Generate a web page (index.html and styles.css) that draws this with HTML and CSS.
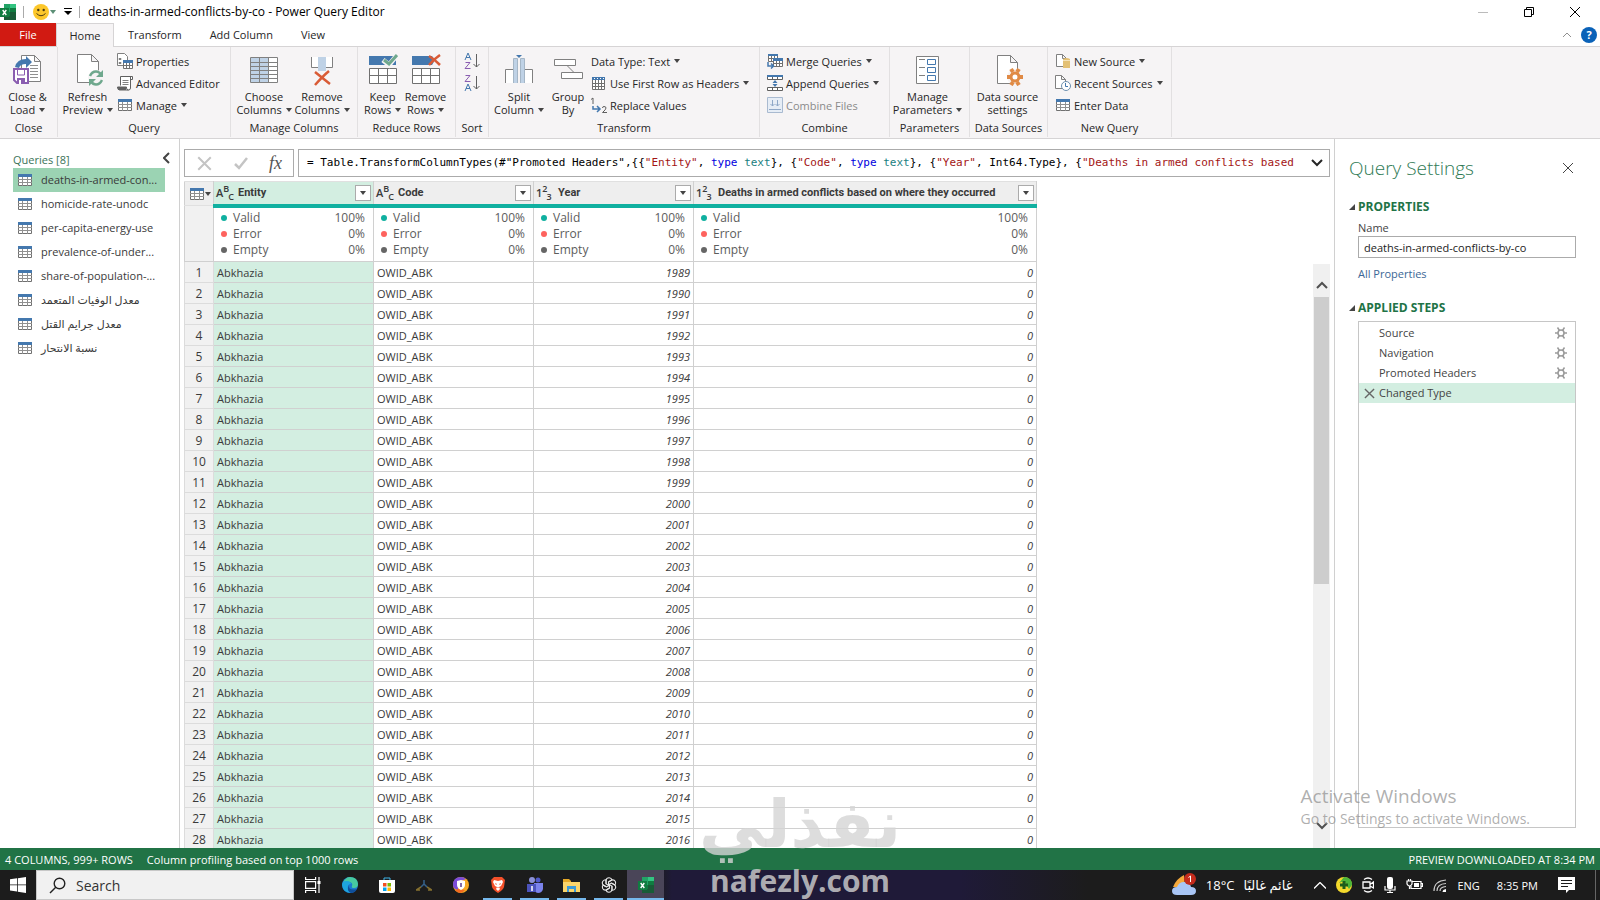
FILE: index.html
```
<!DOCTYPE html>
<html lang="en">

<head>
  <meta charset="UTF-8" />
  <meta name="viewport" content="width=device-width, initial-scale=1.0" />
  <title>deaths-in-armed-conflicts-by-co - Power Query Editor</title>
  <link rel="stylesheet" href="styles.css">
</head>

<body>
  <!-- Shared icons -->
  <svg class="sprite" aria-hidden="true">
    <symbol id="icon-table" viewBox="0 0 14 12">
      <path fill="#fff" stroke="#707070" d="M.5 .5h13v11h-13z" />
      <path fill="none" stroke="#909090" d="M0 5.500h14M0 8.500h14M4.500 3v9M9.500 3v9" />
      <path fill="#4478ae" d="M0 0h14v3H0z" />
    </symbol>
    <symbol id="icon-cross" viewBox="0 0 12 12">
      <path fill="none" stroke="currentColor" d="M1 1l10 10M11 1L1 11" />
    </symbol>
    <symbol id="icon-down" viewBox="0 0 12 8">
      <path fill="none" stroke="currentColor" stroke-width="2" d="M1 1l5 5 5-5" />
    </symbol>
    <symbol id="icon-gear" viewBox="0 0 12 12">
      <circle cx="6" cy="6" r="3" fill="none" stroke="#9a9a9a" stroke-width="1.500" />
      <path fill="none" stroke="#9a9a9a" stroke-width="1.500" d="M0 6h3M9 6h3M2.500 .5l2 3M9.500 .5l-2 3M2.500 11.500l2-3M9.500 11.500l-2-3" />
    </symbol>
    <symbol id="icon-excel" viewBox="0 0 16 16">
      <path fill="#21a366" d="M4 0h12v8H4z" />
      <path fill="#33c481" d="M10 0h6v4h-6z" />
      <path fill="#107c41" d="M10 4h6v4h-6zM4 8h6v4H4z" />
      <path fill="#185c37" d="M4 12h12v4H4zM10 8h6v4h-6z" />
      <path fill="#107c41" d="M0 4h9v9H0z" />
      <path fill="none" stroke="#fff" stroke-width="1.400" d="M2.700 6l3.600 5M6.300 6l-3.600 5" />
    </symbol>
  </svg>

  <div class="app">
    <header class="titlebar">
      <svg class="titlebar_logo" width="16" height="16"><use href="#icon-excel" /></svg>
      <span class="titlebar_divider"></span>
      <button class="titlebar_smile" aria-label="Send a smile">
        <svg width="16" height="16" viewBox="0 0 16 16">
          <circle cx="8" cy="8" r="8" fill="#fcc72b" />
          <circle cx="5.300" cy="6" r="1.200" fill="#4b3a12" />
          <circle cx="10.700" cy="6" r="1.200" fill="#4b3a12" />
          <path fill="none" stroke="#4b3a12" d="M3.500 9.500q4.500 4.500 9 0" />
        </svg>
        <i class="caret caret-green"></i>
      </button>
      <button class="titlebar_quick" aria-label="Customize toolbar">
        <svg width="8" height="7" viewBox="0 0 8 7"><path d="M0 0h8v1H0zM0 3h8L4 7z" /></svg>
      </button>
      <span class="titlebar_divider"></span>
      <h1 class="titlebar_title">deaths-in-armed-conflicts-by-co - Power Query Editor</h1>
      <div class="window-controls">
        <button class="is-faint" aria-label="Minimize"><svg width="10" height="10" viewBox="0 0 10 10"><path stroke="currentColor" d="M0 5.500h10" /></svg></button>
        <button aria-label="Restore"><svg width="10" height="10" viewBox="0 0 10 10"><path fill="none" stroke="currentColor" d="M.5 2.500h7v7h-7zM2.500 2.500v-2h7v7h-2" /></svg></button>
        <button aria-label="Close"><svg width="12" height="12"><use href="#icon-cross" /></svg></button>
      </div>
    </header>

    <nav class="tabs">
      <button class="tab tab-file">File</button>
      <button class="tab tab-active">Home</button>
      <button class="tab">Transform</button>
      <button class="tab">Add Column</button>
      <button class="tab">View</button>
      <div class="tabs_tools">
        <button class="tabs_collapse" aria-label="Collapse ribbon"><svg width="8" height="6" viewBox="0 0 8 6"><path fill="none" stroke="#909090" d="M0 5l4-4 4 4" /></svg></button>
        <button class="help" aria-label="Help">?</button>
      </div>
    </nav>

    <section class="ribbon">
      <div class="group group-close">
        <div class="group_body">
          <button class="big">
            <svg width="30" height="32" viewBox="0 0 30 32">
              <path fill="#fff" stroke="#808080" d="M8.500 1.500h13l6 6v20h-19zM21.500 1.500v6h6" />
              <path stroke="#909090" d="M17 11.500h8M17 14.500h8M17 17.500h8M17 20.500h8M17 23.500h8" />
              <path fill="#4478ae" d="M2 13q2-8 11-8V2l6 6-6 6v-4q-6 0-7 4z" />
              <path fill="#fff" stroke="#8a5db0" stroke-width="2" d="M1 15h14v14H4l-3-3z" />
              <path fill="#8a5db0" d="M4 24h8v6H4z" />
              <path fill="none" stroke="#8a5db0" d="M4.500 16v5h7v-5" />
              <path fill="#fff" d="M6 26h2v4H6z" />
            </svg>
            <span>Close &amp;<br>Load <i class="caret"></i></span>
          </button>
        </div>
        <h2 class="group_name">Close</h2>
      </div>

      <div class="group group-query">
        <div class="group_body">
          <button class="big">
            <svg width="30" height="32" viewBox="0 0 30 32">
              <path fill="#fff" stroke="#808080" d="M4.500 .5h14l7 7v21h-21zM18.500 .5v7h7" />
              <circle cx="23" cy="24" r="8" fill="#f6f4f5" />
              <path fill="none" stroke="#6fa88d" stroke-width="2.500" d="M17 22q2-4.500 6-4.500 3 0 5 3M29 26q-2 4.500-6 4.500-3 0-5-3" />
              <path fill="#6fa88d" d="M30 16v7h-7zM16 32v-7h7z" />
            </svg>
            <span>Refresh<br>Preview <i class="caret"></i></span>
          </button>
          <div class="stack">
            <button class="small">
              <svg width="16" height="16" viewBox="0 0 16 16">
                <path fill="#fff" stroke="#808080" d="M.5 .5h7l3 3v9H.5z" />
                <path fill="none" stroke="#808080" d="M2 5.500h2v1H2zM2 9.500h2v1H2z" />
                <path fill="#fff" stroke="#707070" d="M6.500 7.500h9v8h-9zM6 12.500h10M9.500 9v7M12.500 9v7" />
                <path fill="#4478ae" d="M6 7h10v3H6z" />
              </svg>Properties
            </button>
            <button class="small">
              <svg width="16" height="16" viewBox="0 0 16 16">
                <path fill="#fff" stroke="#606060" d="M3.500 10.500v-9h10v11.500q0 2-2 2H2.500q-2 0-2-3h9v1q0 2 2 2M13.500 4.500h2v-3h-3" />
                <path stroke="#808080" d="M5.500 5.500h6M5.500 7.500h6M5.500 9.500h6" />
                <path fill="#606060" d="M0 12h9v3H2z" />
              </svg>Advanced Editor
            </button>
            <button class="small"><svg class="icon-pad" width="14" height="12"><use href="#icon-table" /></svg>Manage <i class="caret"></i></button>
          </div>
        </div>
        <h2 class="group_name">Query</h2>
      </div>

      <div class="group group-columns">
        <div class="group_body">
          <button class="big">
            <svg width="30" height="32" viewBox="0 0 30 32">
              <path fill="#fff" d="M1 3h28v26H1z" />
              <path fill="#bfd2e6" d="M2 4h17v24H2z" />
              <path fill="none" stroke="#808080" d="M1.500 3.500h27v25h-27zM1 8.500h28M1 12.500h28M1 16.500h28M1 20.500h28M1 24.500h28M10.500 3v26M19.500 3v26" />
            </svg>
            <span>Choose<br>Columns <i class="caret"></i></span>
          </button>
          <button class="big">
            <svg width="30" height="32" viewBox="0 0 30 32">
              <path fill="#fff" d="M4 3h7v10H4zM19 3h7v10h-7z" />
              <path fill="none" stroke="#808080" d="M4.500 3v10.500h7M18.500 13.500h7V3" />
              <path fill="#bfd2e6" d="M11 3h8v14h-8z" />
              <path fill="none" stroke="#d95b36" stroke-width="2.500" d="M8 18q5 4 15 12M22 17q-6 5-14 14" />
            </svg>
            <span>Remove<br>Columns <i class="caret"></i></span>
          </button>
        </div>
        <h2 class="group_name">Manage Columns</h2>
      </div>

      <div class="group group-rows">
        <div class="group_body">
          <button class="big">
            <svg width="30" height="32" viewBox="0 0 30 32">
              <path fill="#4478ae" d="M1 2h27v9H1z" />
              <path fill="#fff" stroke="#707070" d="M1.500 14.500h27v15h-27zM1 21.500h28M10.500 14v16M19.500 14v16" />
              <path fill="none" stroke="#f6f4f5" stroke-width="5" d="M15 6l6 5 8-10" />
              <path fill="none" stroke="#6fa88d" stroke-width="3" d="M16 6l5 4 8-9" />
            </svg>
            <span>Keep<br>Rows <i class="caret"></i></span>
          </button>
          <button class="big">
            <svg width="30" height="32" viewBox="0 0 30 32">
              <path fill="#4478ae" d="M1 2h20l3 4-3 5H1z" />
              <path fill="#fff" stroke="#707070" d="M1.500 14.500h27v15h-27zM1 21.500h28M10.500 14v16M19.500 14v16" />
              <path fill="none" stroke="#d95b36" stroke-width="2.500" d="M18 2q5 3 11 9M29 1q-6 4-11 10" />
            </svg>
            <span>Remove<br>Rows <i class="caret"></i></span>
          </button>
        </div>
        <h2 class="group_name">Reduce Rows</h2>
      </div>

      <div class="group group-sort">
        <div class="group_body">
          <div class="stack">
            <button class="small sort" aria-label="Sort ascending">
              <svg width="16" height="18" viewBox="0 0 16 18">
                <path fill="none" stroke="#4478ae" d="M1 8l3-7 3 7M2 5.500h4" />
                <path fill="none" stroke="#8a5db0" d="M1.500 10.500h4.500l-5 6h5.500" />
                <path fill="none" stroke="#606060" d="M12.500 2v13M9.500 12l3 3 3-3" />
              </svg>
            </button>
            <button class="small sort" aria-label="Sort descending">
              <svg width="16" height="18" viewBox="0 0 16 18">
                <path fill="none" stroke="#8a5db0" d="M1.500 1.500h4.500l-5 6h5.500" />
                <path fill="none" stroke="#4478ae" d="M1 17l3-7 3 7M2 14.500h4" />
                <path fill="none" stroke="#606060" d="M12.500 2v13M9.500 12l3 3 3-3" />
              </svg>
            </button>
          </div>
        </div>
        <h2 class="group_name">Sort</h2>
      </div>

      <div class="group group-transform">
        <div class="group_body">
          <button class="big">
            <svg width="30" height="32" viewBox="0 0 30 32">
              <path fill="#fff" stroke="#808080" d="M1.500 29V15.500h8V29M20.500 29V15.500h8V29" />
              <path fill="#bfd2e6" stroke="#a5b6c6" d="M9.500 29V4.500h4V29M16.500 29V4.500h4V29" />
              <path fill="#4478ae" d="M12 1h6l-3 3z" />
            </svg>
            <span>Split<br>Column <i class="caret"></i></span>
          </button>
          <button class="big">
            <svg width="30" height="32" viewBox="0 0 30 32">
              <path fill="#fff" stroke="#808080" d="M1.500 5.500h21v6h-21zM8.500 18.500h21v6h-21zM14 11.500l7 7" />
            </svg>
            <span>Group<br>By</span>
          </button>
          <div class="stack">
            <button class="small">Data Type: Text <i class="caret"></i></button>
            <button class="small">
              <svg width="16" height="14" viewBox="0 0 16 14">
                <path fill="#fff" stroke="#707070" d="M1.500 1.500h12v12h-12zM1 7.500h13M1 10.500h13M4.500 4v10M7.500 4v10M10.500 4v10" />
                <path fill="#4478ae" d="M1 1h13v3H1z" />
                <path stroke="#fff" stroke-dasharray="1 2" d="M3 2.500h10" />
              </svg>Use First Row as Headers <i class="caret"></i>
            </button>
            <button class="small">
              <svg width="16" height="16" viewBox="0 0 16 16">
                <path fill="none" stroke="#606060" d="M0 2.500l2-1.500v6M11.500 11q0-1.500 1.500-1.500 2 0 2 1.500t-3.500 4.500H16" />
                <path fill="none" stroke="#4478ae" stroke-width="1.500" d="M2 9v3h6M6 9l3 3-3 3" />
              </svg>Replace Values
            </button>
          </div>
        </div>
        <h2 class="group_name">Transform</h2>
      </div>

      <div class="group group-combine">
        <div class="group_body">
          <div class="stack">
            <button class="small">
              <svg width="16" height="16" viewBox="0 0 16 16">
                <path fill="#fff" stroke="#707070" d="M1.500 1.500h9v7h-9zM1 5.500h10M4.500 3v6M7.500 3v6" />
                <path fill="#4478ae" d="M1 1h10v2H1z" />
                <path fill="#fff" stroke="#707070" d="M6.500 6.500h9v7h-9zM6 10.500h10M9.500 8v6M12.500 8v6" />
                <path fill="#4478ae" d="M6 5h10v3H6z" />
                <path fill="none" stroke="#4478ae" stroke-width="1.500" d="M1 9v4h5M4 10.500l2.500 2.500L4 15.500" />
              </svg>Merge Queries <i class="caret"></i>
            </button>
            <button class="small">
              <svg width="16" height="16" viewBox="0 0 16 16">
                <path fill="#fff" stroke="#606060" d="M.5 1.500h15v3H.5zM.5 12.500h15v3H.5zM5.500 1v4M10.500 1v4M5.500 12v4M10.500 12v4" />
                <path fill="#4478ae" d="M0 0h16v2H0zM8 5l2.500 3h-5zM8 12l2.500-3h-5z" />
              </svg>Append Queries <i class="caret"></i>
            </button>
            <button class="small" disabled>
              <svg width="16" height="16" viewBox="0 0 16 16">
                <path fill="#e6edf6" stroke="#a9bad0" d="M.5 .5h15v15H.5z" />
                <path fill="none" stroke="#8fa8c8" d="M2 12.500h12M5.500 3v6M3.500 7l2 2 2-2M10.500 3v6M8.500 7l2 2 2-2" />
              </svg>Combine Files
            </button>
          </div>
        </div>
        <h2 class="group_name">Combine</h2>
      </div>

      <div class="group group-parameters">
        <div class="group_body">
          <button class="big">
            <svg width="30" height="32" viewBox="0 0 30 32">
              <path fill="#fff" stroke="#808080" d="M3.500 2.500h22v27h-22z" />
              <path stroke="#808080" d="M6 5.500h6M6 13.500h6M6 21.500h6" />
              <path fill="none" stroke="#4478ae" d="M14.500 5.500h8v5h-8zM14.500 13.500h8v5h-8zM14.500 21.500h8v5h-8z" />
            </svg>
            <span>Manage<br>Parameters <i class="caret"></i></span>
          </button>
        </div>
        <h2 class="group_name">Parameters</h2>
      </div>

      <div class="group group-sources">
        <div class="group_body">
          <button class="big">
            <svg width="30" height="32" viewBox="0 0 30 32">
              <path fill="#fff" stroke="#808080" d="M4.500 1.500h13l7 7v21h-20zM17.500 1.500v7h7" />
              <circle cx="22" cy="23" r="8" fill="#f6f4f5" />
              <circle cx="22" cy="23" r="4" fill="#fff" stroke="#e08a45" stroke-width="3" />
              <path stroke="#e08a45" stroke-width="4" d="M14 23h3M27 23h3M20 18l-2-3M24 18l2-3M20 28l-2 3M24 28l2 3" />
            </svg>
            <span>Data source<br>settings</span>
          </button>
        </div>
        <h2 class="group_name">Data Sources</h2>
      </div>

      <div class="group group-new">
        <div class="group_body">
          <div class="stack">
            <button class="small">
              <svg width="16" height="16" viewBox="0 0 16 16">
                <path fill="#fff" stroke="#808080" d="M1.500 1.500h6l4 4v8h-10zM7.500 1.500v4h4" />
                <path fill="#e3c074" d="M8 6q3.500-2 7 0v9H8z" />
                <path stroke="#f4e2b8" d="M8 7.500h7" />
              </svg>New Source <i class="caret"></i>
            </button>
            <button class="small">
              <svg width="16" height="16" viewBox="0 0 16 16">
                <path fill="#fff" stroke="#808080" d="M.5 .5h6l4 4v9H.5zM6.500 .5v4h4" />
                <circle cx="11" cy="11" r="4.500" fill="#fff" stroke="#6d8fae" />
                <path fill="none" stroke="#4478ae" d="M10.500 8v3.500H13" />
              </svg>Recent Sources <i class="caret"></i>
            </button>
            <button class="small"><svg class="icon-pad" width="14" height="12"><use href="#icon-table" /></svg>Enter Data</button>
          </div>
        </div>
        <h2 class="group_name">New Query</h2>
      </div>
    </section>

    <main class="workspace">
      <aside class="queries">
        <header class="queries_header">
          <h2>Queries [8]</h2>
          <button aria-label="Collapse queries"><svg width="7" height="12" viewBox="0 0 7 12"><path fill="none" stroke="#444" stroke-width="2" d="M6 1L1 6l5 5" /></svg></button>
        </header>
        <ul class="queries_list">
          <li class="query query-selected"><svg width="14" height="12"><use href="#icon-table" /></svg>deaths-in-armed-con...</li>
          <li class="query"><svg width="14" height="12"><use href="#icon-table" /></svg>homicide-rate-unodc</li>
          <li class="query"><svg width="14" height="12"><use href="#icon-table" /></svg>per-capita-energy-use</li>
          <li class="query"><svg width="14" height="12"><use href="#icon-table" /></svg>prevalence-of-under...</li>
          <li class="query"><svg width="14" height="12"><use href="#icon-table" /></svg>share-of-population-...</li>
          <li class="query"><svg width="14" height="12"><use href="#icon-table" /></svg><bdi lang="ar">معدل الوفيات المتعمد</bdi></li>
          <li class="query"><svg width="14" height="12"><use href="#icon-table" /></svg><bdi lang="ar">معدل جرايم القتل</bdi></li>
          <li class="query"><svg width="14" height="12"><use href="#icon-table" /></svg><bdi lang="ar">نسبة الانتحار</bdi></li>
        </ul>
      </aside>

      <section class="editor">
        <div class="formula">
          <div class="formula_tools">
            <button aria-label="Cancel"><svg width="15" height="15" viewBox="0 0 12 12"><path fill="none" stroke="#c4c4c4" stroke-width="1.600" d="M1 1l10 10M11 1L1 11" /></svg></button>
            <button aria-label="Accept"><svg width="14" height="13" viewBox="0 0 14 13"><path fill="none" stroke="#c4c4c4" stroke-width="2.500" d="M1 7l4 4 8-10" /></svg></button>
            <button class="formula_fx" aria-label="Add step">fx</button>
          </div>
          <div class="formula_box">
            <code class="formula_text">= Table.TransformColumnTypes(#"Promoted Headers",{{<b class="str">"Entity"</b>, <b class="kw">type</b> <b class="type">text</b>}, {<b class="str">"Code"</b>, <b class="kw">type</b> <b class="type">text</b>}, {<b class="str">"Year"</b>, Int64.Type}, {<b class="str">"Deaths in armed conflicts based</b></code>
            <button aria-label="Expand formula"><svg width="12" height="8"><use href="#icon-down" /></svg></button>
          </div>
        </div>

        <div class="preview">
          <div class="preview_scroll">
            <table class="grid">
              <colgroup>
                <col class="col-num"><col class="col-std"><col class="col-std"><col class="col-std"><col class="col-deaths">
              </colgroup>
              <thead>
                <tr class="grid_head">
                  <th class="corner"><button aria-label="Table menu"><svg width="14" height="12"><use href="#icon-table" /></svg><i class="caret"></i></button></th>
                  <th class="selected"><div class="head"><span class="kind">A<sup>B</sup><sub>C</sub></span>Entity<button class="filter" aria-label="Filter Entity"><i class="caret"></i></button></div></th>
                  <th><div class="head"><span class="kind">A<sup>B</sup><sub>C</sub></span>Code<button class="filter" aria-label="Filter Code"><i class="caret"></i></button></div></th>
                  <th><div class="head"><span class="kind">1<sup>2</sup><sub>3</sub></span>Year<button class="filter" aria-label="Filter Year"><i class="caret"></i></button></div></th>
                  <th><div class="head"><span class="kind">1<sup>2</sup><sub>3</sub></span>Deaths in armed conflicts based on where they occurred<button class="filter" aria-label="Filter Deaths"><i class="caret"></i></button></div></th>
                </tr>
                <tr class="grid_stats">
                  <td class="num"></td>
                  <td><ul class="stats"><li class="valid">Valid<span>100%</span></li><li class="error">Error<span>0%</span></li><li class="empty">Empty<span>0%</span></li></ul></td>
                  <td><ul class="stats"><li class="valid">Valid<span>100%</span></li><li class="error">Error<span>0%</span></li><li class="empty">Empty<span>0%</span></li></ul></td>
                  <td><ul class="stats"><li class="valid">Valid<span>100%</span></li><li class="error">Error<span>0%</span></li><li class="empty">Empty<span>0%</span></li></ul></td>
                  <td><ul class="stats"><li class="valid">Valid<span>100%</span></li><li class="error">Error<span>0%</span></li><li class="empty">Empty<span>0%</span></li></ul></td>
                </tr>
              </thead>
              <tbody>
                <tr><th>1</th><td>Abkhazia</td><td>OWID_ABK</td><td>1989</td><td>0</td></tr>
                <tr><th>2</th><td>Abkhazia</td><td>OWID_ABK</td><td>1990</td><td>0</td></tr>
                <tr><th>3</th><td>Abkhazia</td><td>OWID_ABK</td><td>1991</td><td>0</td></tr>
                <tr><th>4</th><td>Abkhazia</td><td>OWID_ABK</td><td>1992</td><td>0</td></tr>
                <tr><th>5</th><td>Abkhazia</td><td>OWID_ABK</td><td>1993</td><td>0</td></tr>
                <tr><th>6</th><td>Abkhazia</td><td>OWID_ABK</td><td>1994</td><td>0</td></tr>
                <tr><th>7</th><td>Abkhazia</td><td>OWID_ABK</td><td>1995</td><td>0</td></tr>
                <tr><th>8</th><td>Abkhazia</td><td>OWID_ABK</td><td>1996</td><td>0</td></tr>
                <tr><th>9</th><td>Abkhazia</td><td>OWID_ABK</td><td>1997</td><td>0</td></tr>
                <tr><th>10</th><td>Abkhazia</td><td>OWID_ABK</td><td>1998</td><td>0</td></tr>
                <tr><th>11</th><td>Abkhazia</td><td>OWID_ABK</td><td>1999</td><td>0</td></tr>
                <tr><th>12</th><td>Abkhazia</td><td>OWID_ABK</td><td>2000</td><td>0</td></tr>
                <tr><th>13</th><td>Abkhazia</td><td>OWID_ABK</td><td>2001</td><td>0</td></tr>
                <tr><th>14</th><td>Abkhazia</td><td>OWID_ABK</td><td>2002</td><td>0</td></tr>
                <tr><th>15</th><td>Abkhazia</td><td>OWID_ABK</td><td>2003</td><td>0</td></tr>
                <tr><th>16</th><td>Abkhazia</td><td>OWID_ABK</td><td>2004</td><td>0</td></tr>
                <tr><th>17</th><td>Abkhazia</td><td>OWID_ABK</td><td>2005</td><td>0</td></tr>
                <tr><th>18</th><td>Abkhazia</td><td>OWID_ABK</td><td>2006</td><td>0</td></tr>
                <tr><th>19</th><td>Abkhazia</td><td>OWID_ABK</td><td>2007</td><td>0</td></tr>
                <tr><th>20</th><td>Abkhazia</td><td>OWID_ABK</td><td>2008</td><td>0</td></tr>
                <tr><th>21</th><td>Abkhazia</td><td>OWID_ABK</td><td>2009</td><td>0</td></tr>
                <tr><th>22</th><td>Abkhazia</td><td>OWID_ABK</td><td>2010</td><td>0</td></tr>
                <tr><th>23</th><td>Abkhazia</td><td>OWID_ABK</td><td>2011</td><td>0</td></tr>
                <tr><th>24</th><td>Abkhazia</td><td>OWID_ABK</td><td>2012</td><td>0</td></tr>
                <tr><th>25</th><td>Abkhazia</td><td>OWID_ABK</td><td>2013</td><td>0</td></tr>
                <tr><th>26</th><td>Abkhazia</td><td>OWID_ABK</td><td>2014</td><td>0</td></tr>
                <tr><th>27</th><td>Abkhazia</td><td>OWID_ABK</td><td>2015</td><td>0</td></tr>
                <tr><th>28</th><td>Abkhazia</td><td>OWID_ABK</td><td>2016</td><td>0</td></tr>
              </tbody>
            </table>
          </div>
          <div class="scrollbar">
            <button class="scrollbar_up" aria-label="Scroll up"><svg width="12" height="8"><use href="#icon-down" /></svg></button>
            <div class="scrollbar_thumb"></div>
            <button class="scrollbar_down" aria-label="Scroll down"><svg width="12" height="8"><use href="#icon-down" /></svg></button>
          </div>
        </div>
      </section>

      <aside class="settings">
        <header class="settings_header">
          <h2>Query Settings</h2>
          <button aria-label="Close settings"><svg width="12" height="12"><use href="#icon-cross" /></svg></button>
        </header>
        <h3 class="settings_section">PROPERTIES</h3>
        <div class="settings_props">
          <label for="query_name">Name</label>
          <input id="query_name" type="text" value="deaths-in-armed-conflicts-by-co" />
          <a href="#">All Properties</a>
        </div>
        <h3 class="settings_section">APPLIED STEPS</h3>
        <ol class="steps">
          <li class="step">Source<button aria-label="Edit Source"><svg width="12" height="12"><use href="#icon-gear" /></svg></button></li>
          <li class="step">Navigation<button aria-label="Edit Navigation"><svg width="12" height="12"><use href="#icon-gear" /></svg></button></li>
          <li class="step">Promoted Headers<button aria-label="Edit Promoted Headers"><svg width="12" height="12"><use href="#icon-gear" /></svg></button></li>
          <li class="step step-selected"><svg width="11" height="11" viewBox="0 0 12 12"><path fill="none" stroke="#666" stroke-width="1.500" d="M1 1l10 10M11 1L1 11" /></svg>Changed Type</li>
        </ol>
      </aside>
    </main>

    <footer class="statusbar">
      <span>4 COLUMNS, 999+ ROWS</span>
      <span>Column profiling based on top 1000 rows</span>
      <span class="statusbar_right">PREVIEW DOWNLOADED AT 8:34 PM</span>
    </footer>

    <footer class="taskbar">
      <button class="start" aria-label="Start"><svg width="16" height="16" viewBox="0 0 16 16"><path fill="#fff" d="M0 2.300L7 1.300v6.200H0zM7.800 1.200L16 0v7.500H7.800zM0 8.300h7v6.300l-7-1zM7.800 8.300H16V16l-8.200-1.200z" /></svg></button>
      <label class="search">
        <svg width="17" height="17" viewBox="0 0 17 17"><path fill="none" stroke="#222" stroke-width="1.400" d="M7 10L1 16" /><circle cx="10.500" cy="6.500" r="5.300" fill="none" stroke="#222" stroke-width="1.400" /></svg>
        <input type="text" placeholder="Search" aria-label="Search" />
      </label>
      <div class="tasks">
        <button aria-label="Task view"><svg width="16" height="16" viewBox="0 0 16 16"><path fill="none" stroke="#fff" stroke-width="1.200" d="M.6 0v2.500h10V0M.6 16v-2.500h10V16M.6 4.600h10v6.800H.6zM14 0v16" /><path fill="#fff" d="M12.500 4h3v3h-3z" /></svg></button>
        <button aria-label="Edge">
          <svg width="16" height="16" viewBox="0 0 16 16">
            <circle cx="8" cy="8" r="8" fill="#1b78d0" />
            <path fill="#47c9a0" d="M1 5.500Q3.500 0 8 0q7.500 0 8 7 0 4-4 4-3 0-2-2 1-3-2-4-4-1-7 .5z" />
            <path fill="#1ea5dd" d="M0 8q0-4 4.500-4 4 0 4.500 3-4 0-3 5 .5 3 4 4Q1 16 0 8z" />
            <path fill="#0f4f9b" d="M7 8q-1 6 8 4-2 4-6 4-5-2-2-8z" />
          </svg>
        </button>
        <button aria-label="Store">
          <svg width="16" height="16" viewBox="0 0 16 16">
            <path fill="none" stroke="#3cb3e5" d="M5 4V1h6v3" />
            <path fill="#fff" d="M0 3h16v11q0 2-2 2H2q-2 0-2-2z" />
            <path fill="#f25022" d="M4 6h3.500v3.500H4z" /><path fill="#7fba00" d="M8.500 6H12v3.500H8.500z" />
            <path fill="#00a4ef" d="M4 10.500h3.500V14H4z" /><path fill="#ffb900" d="M8.500 10.500H12V14H8.500z" />
          </svg>
        </button>
        <button aria-label="Hanger"><svg width="16" height="16" viewBox="0 0 16 16"><path fill="none" stroke="#35618a" stroke-width="1.500" d="M8 3v4l-3 3M8 7l3 3" /><path fill="none" stroke="#85702f" stroke-width="1.500" d="M5 10l-5 3h4M11 10l5 3h-4" /></svg></button>
        <button aria-label="Secure browser">
          <svg width="16" height="16" viewBox="0 0 16 16">
            <circle cx="8" cy="8" r="8" fill="#f6a723" />
            <path fill="#7a4bd8" d="M0 8Q0 0 8 0q3 0 5 2L5 5v8Q0 12 0 8z" />
            <path fill="#f26a21" d="M2 13l4-1 6 1q-5 6-10 0z" />
            <path fill="#fff" d="M4 4l4-1 4 1v4q0 3-4 5-4-2-4-5z" />
            <path stroke="#5a3a90" stroke-width="1.500" d="M8 6v4" />
          </svg>
        </button>
        <button class="is-open" aria-label="Brave"><svg width="16" height="16" viewBox="0 0 16 16"><path fill="#f4502a" d="M4 0h8l3 3-1 7q-1 3-6 6-5-3-6-6L1 3z" /><path fill="#fff" d="M4 3l4 1 4-1 1 2-2 4-2 1 1 2-2 2-2-2 1-2-2-1-2-4z" /><path fill="#f4502a" d="M5 6l2 1-1 1zM11 6L9 7l1 1zM7 10h2l-1 1z" /></svg></button>
        <button class="is-open" aria-label="Teams"><svg width="16" height="16" viewBox="0 0 16 16"><circle cx="5" cy="3" r="3" fill="#8b90d8" /><circle cx="11" cy="3" r="2.500" fill="#5059c9" /><path fill="#7b83eb" d="M7 6h9v6q-1 4-5 4-4-1-4-4z" /><path fill="#4b53bc" d="M0 7h9v8H0z" /><path stroke="#fff" stroke-width="1.500" d="M5 9v5" /></svg></button>
        <button class="is-open" aria-label="File Explorer"><svg width="17" height="15" viewBox="0 0 17 15"><path fill="#e7a927" d="M0 1h6l2 2v4H0z" /><path fill="#fbd56b" d="M0 4h17v10H0z" /><path fill="#3e9bd6" d="M4 14V8h9v6h-2v-3H6v3z" /></svg></button>
        <button class="is-open" aria-label="ChatGPT">
          <svg width="16" height="16" viewBox="0 0 16 16">
            <g fill="none" stroke="#e8e8e8" stroke-width="1.100">
              <path id="petal" d="M5 7V3.500Q5.500 .7 8.200 .8q2 .2 2.800 2L7.500 5v4" />
              <use href="#petal" transform="rotate(60 8 8)" /><use href="#petal" transform="rotate(120 8 8)" />
              <use href="#petal" transform="rotate(180 8 8)" /><use href="#petal" transform="rotate(240 8 8)" />
              <use href="#petal" transform="rotate(300 8 8)" />
            </g>
          </svg>
        </button>
        <button class="is-open is-current" aria-label="Excel"><svg width="16" height="16"><use href="#icon-excel" /></svg></button>
      </div>
      <div class="tray">
        <button class="tray_weather">
          <svg width="25" height="24" viewBox="0 0 25 24">
            <path fill="#f5a93b" d="M12 2q-8 4-11 12h12z" />
            <path fill="#a9c6f5" d="M5 22q-5 0-5-4t5-4q2-5 7-5 6 0 7 5 5 0 5 4t-5 4z" />
            <circle cx="18" cy="6" r="6" fill="#c42b1c" />
            <path fill="none" stroke="#fff" d="M16.500 4.500l2-1.500v6" />
          </svg>
          <span>18°C</span>
          <bdi lang="ar">غائم غالبًا</bdi>
        </button>
        <button aria-label="Hidden icons"><svg width="12" height="7" viewBox="0 0 12 7"><path fill="none" stroke="#fff" stroke-width="1.300" d="M0 6.500l6-6 6 6" /></svg></button>
        <button aria-label="Security"><svg width="16" height="16" viewBox="0 0 16 16"><circle cx="8" cy="8" r="8" fill="#f4d92c" /><path fill="#4cb53a" d="M8 0q8 0 8 8l-3 4-5-8-5 2z" /><path stroke="#1c5e1c" stroke-width="3" d="M8 4v8M4 8h8" /></svg></button>
        <button aria-label="Camera"><svg width="12" height="16" viewBox="0 0 12 16"><path fill="none" stroke="#fff" stroke-width="1.300" d="M1 5h7v6H1zM8 7.500L11.500 5v6L8 9M2 2.500q4-3 8 0M2 13.500q4 3 8 0" /></svg></button>
        <button aria-label="Microphone"><svg width="12" height="16" viewBox="0 0 12 16"><rect x="3" width="6" height="12" rx="2" fill="#fff" /><path fill="none" stroke="#fff" stroke-width="1.200" d="M1 9v4h10V9M6 13v3M3 15.500h6" /></svg></button>
        <button aria-label="Battery"><svg width="17" height="14" viewBox="0 0 17 14"><path fill="none" stroke="#fff" stroke-width="1.200" d="M6 3.500h9v7H5V8M15 5.500h1.500v3H15M1 3h5v3q-1 2-2.500 2T1 6zM2.500 1v2M4.500 1v2M3.500 8v3" /><path fill="#fff" d="M8 5h5v4H8z" /></svg></button>
        <button aria-label="Network"><svg width="14" height="13" viewBox="0 0 14 13"><path fill="none" stroke="#ccc" stroke-width="1.200" d="M1 12Q1 2 13 1M4 12q0-7 9-7.500M7 12q0-4 6-4.500" /><path fill="#fff" d="M9.500 13q0-2.500 3.500-3v3z" /></svg></button>
        <span class="tray_lang">ENG</span>
        <span class="tray_clock">8:35 PM</span>
        <button class="tray_notes" aria-label="Notifications"><svg width="17" height="16" viewBox="0 0 17 16"><path fill="#fff" d="M0 0h17v13h-6l-3 3v-3H0z" /><path stroke="#1c1c1c" d="M3 3.500h11M3 6.500h11M3 9.500h7" /></svg></button>
      </div>
    </footer>
  </div>

  <div class="activate">
    <strong>Activate Windows</strong>
    <span>Go to Settings to activate Windows.</span>
  </div>
  <div class="brand">
    <span class="brand_ar" lang="ar" dir="rtl">نفذلي</span>
    <span class="brand_en">nafezly.com</span>
  </div>
</body>
</html>
```
FILE: styles.css
```
* {
  box-sizing: border-box;
}

body {
  margin: 0;
  font-family: "Open Sans", "DejaVu Sans", sans-serif;
  font-size: 11px;
  line-height: 13px;
  color: #262626;
  background: #fff;
  overflow: hidden;
}

h1,
h2,
h3,
ul,
ol {
  margin: 0;
  padding: 0;
  font-size: 11px;
  font-weight: 400;
  list-style: none;
}

button {
  display: flex;
  align-items: center;
  justify-content: center;
  margin: 0;
  padding: 0;
  border: 0;
  font: inherit;
  color: inherit;
  background: none;
}

svg {
  display: block;
  flex: none;
}

.sprite {
  position: absolute;
  width: 0;
  height: 0;
}

.app {
  display: flex;
  flex-direction: column;
  height: 100vh;
}

.caret {
  display: inline-block;
  flex: none;
  margin-left: 1px;
  border: solid 3px transparent;
  border-top: solid 4px #444;
  border-bottom: 0;
  vertical-align: 2px;
}

.caret-green {
  border-top-color: #5c8f76;
}

/* Title bar */
.titlebar {
  display: flex;
  align-items: center;
  height: 23px;
}

.titlebar_divider {
  width: 1px;
  height: 12px;
  margin: 0 8px 0 7px;
  background: #aaa;
}

.titlebar_smile {
  margin-left: 1px;
}

.titlebar_quick {
  margin-left: 8px;
}

.titlebar_title {
  font-size: 12px;
  line-height: 16px;
  color: #000;
}

.window-controls {
  display: flex;
  margin-left: auto;
  padding-right: 2px;
  color: #000;
}

.window-controls button {
  width: 46px;
  height: 20px;
}

.window-controls .is-faint {
  color: #bbb;
}

/* Tabs */
.tabs {
  display: flex;
  height: 24px;
  border-bottom: solid 1px #d6d4d5;
}

.tab {
  height: 23px;
  padding: 0 14px;
}

.tab-file {
  width: 56px;
  color: #fff;
  background: #d11a12;
}

.tab-active {
  width: 58px;
  height: 24px;
  border: solid 1px #d6d4d5;
  border-bottom: 0;
  background: #f6f4f5;
}

.tabs_tools {
  display: flex;
  align-items: center;
  gap: 10px;
  margin-left: auto;
  padding-right: 3px;
}

.help {
  width: 16px;
  height: 16px;
  border-radius: 50%;
  font-weight: 700;
  color: #fff;
  background: #0a62b8;
}

/* Ribbon */
.ribbon {
  display: flex;
  height: 92px;
  padding-bottom: 1px;
  border-bottom: solid 1px #d6d4d5;
  background: #f6f4f5;
}

.group {
  display: flex;
  flex-direction: column;
  flex: none;
  padding-top: 3px;
  border-right: solid 1px #e2e0e1;
}

.group_body {
  display: flex;
  flex: 1;
}

.group_name {
  height: 16px;
  text-align: center;
  white-space: nowrap;
}

.big {
  flex-direction: column;
  justify-content: flex-start;
  gap: 4px;
  padding-top: 4px;
  white-space: nowrap;
}

.stack {
  display: flex;
  flex-direction: column;
}

.small {
  justify-content: flex-start;
  gap: 3px;
  height: 22px;
  white-space: nowrap;
}

.small:disabled {
  color: #8a8a8a;
}

.icon-pad {
  margin: 0 1px;
}

.group-close {
  width: 58px;
}

.group-close .big {
  width: 55px;
}

.group-query {
  width: 173px;
}

.group-query .big {
  width: 59px;
}

.group-columns {
  width: 127px;
}

.group-columns .big {
  width: 58px;
}

.group-columns .group_body {
  padding-left: 4px;
}

.group-rows {
  width: 98px;
}

.group-rows .big {
  width: 43px;
}

.group-rows .group_body {
  padding-left: 3px;
}

.group-sort {
  width: 33px;
}

.sort {
  padding-left: 8px;
}

.group-transform {
  width: 271px;
}

.group-transform .group_body {
  padding-left: 4px;
}

.group-transform .big {
  width: 46px;
}

.group-transform .big:first-child {
  width: 52px;
}

.group-combine {
  width: 130px;
}

.group-combine .group_body,
.group-new .group_body {
  padding-left: 7px;
}

.group-parameters {
  width: 80px;
}

.group-sources {
  width: 78px;
}

.group-parameters .big,
.group-sources .big {
  width: 75px;
}

.group-new {
  width: 124px;
}

/* Workspace */
.workspace {
  display: flex;
  flex: 1;
  min-height: 0;
}

.queries {
  width: 180px;
  padding: 13px 14px 0 13px;
  border-right: solid 1px #d0d0d0;
  font-size: 12px;
  line-height: 16px;
  color: #3a3a3a;
}

.queries_header {
  display: flex;
  justify-content: space-between;
  height: 16px;
}

.queries_header h2 {
  color: #3a7358;
}

.queries_header button {
  height: 12px;
  margin-right: -5px;
}

.query {
  display: flex;
  align-items: center;
  gap: 9px;
  height: 24px;
  padding-left: 5px;
  white-space: nowrap;
}

.query-selected {
  background: #9bd3b3;
}

/* Formula bar and preview grid */
.editor {
  display: flex;
  flex-direction: column;
  flex: 1;
  min-width: 0;
  padding: 10px 4px 0 4px;
}

.formula {
  display: flex;
  gap: 4px;
  height: 28px;
  margin-bottom: 4px;
}

.formula_tools,
.formula_box {
  display: flex;
  align-items: center;
  border: solid 1px #ababab;
}

.formula_tools {
  justify-content: space-between;
  width: 110px;
  padding: 0 11px 0 12px;
}

.formula_fx {
  font: italic 18px/20px "Liberation Serif", serif;
  color: #555;
}

.formula_box {
  flex: 1;
  min-width: 0;
  padding: 0 6px 0 8px;
}

.formula_text {
  flex: 1;
  overflow: hidden;
  font: 11px/16px "DejaVu Sans Mono", monospace;
  white-space: pre;
  color: #000;
}

.formula_text b {
  font-weight: 400;
}

.formula_text .str {
  color: #a31515;
}

.formula_text .kw {
  color: #0000e0;
}

.formula_text .type {
  color: #1a8080;
}

.preview {
  display: flex;
  justify-content: space-between;
  flex: 1;
  min-height: 0;
}

.preview_scroll {
  overflow: hidden;
}

.grid {
  width: 852px;
  table-layout: fixed;
  border-collapse: collapse;
  color: #3a3a3a;
}

.col-num {
  width: 29px;
}

.col-std {
  width: 160px;
}

.col-deaths {
  width: 343px;
}

.grid th,
.grid td {
  height: 21px;
  padding: 0 3px;
  border: solid 1px #d0d0d0;
  font-weight: 400;
  text-align: left;
  white-space: nowrap;
}

.grid tbody th {
  padding: 0;
  border-color: #dcdcdc;
  font-size: 12px;
  text-align: center;
  background: #f1f1f1;
}

.grid tbody td:nth-child(2) {
  background: #d3eee1;
}

.grid tbody td:nth-child(n+4) {
  font-style: italic;
  text-align: right;
}

.grid .grid_head th {
  height: 24px;
  padding: 0;
  border-top: solid 1px #e0e0e0;
  border-bottom: solid 4px #10b0a0;
  font-family: Roboto, sans-serif;
  font-weight: 700;
  background: #eee;
}

.grid .grid_head .selected {
  background: #d3eee1;
}

.grid .grid_head .corner {
  padding-left: 5px;
  border-bottom: solid 1px #e0e0e0;
}

.head {
  display: flex;
  align-items: center;
  padding: 0 2px;
}

.kind {
  flex: none;
  width: 22px;
  font: 11px/16px "Open Sans", sans-serif;
  font-weight: 600;
}

.kind sup,
.kind sub {
  font-size: 9px;
  line-height: 0;
}

.kind sub {
  margin-left: -1px;
}

.filter {
  width: 16px;
  height: 16px;
  margin-left: auto;
  border: solid 1px #ababab;
  background: #fff;
}

.filter .caret {
  margin: 0;
}

.grid .grid_stats td {
  height: 56px;
  padding: 0 8px 0 7px;
}

.grid .grid_stats .num {
  background: #f1f1f1;
}

.stats {
  font-size: 12px;
  line-height: 16px;
  color: #5c5c5c;
}

.stats li {
  display: flex;
  align-items: center;
  gap: 6px;
}

.stats li::before {
  width: 6px;
  height: 6px;
  border-radius: 50%;
  background: #666;
  content: "";
}

.stats .valid::before {
  background: #10b0a0;
}

.stats .error::before {
  background: #fd625e;
}

.stats span {
  margin-left: auto;
}

.scrollbar {
  display: flex;
  flex-direction: column;
  width: 17px;
  margin-top: 83px;
  color: #505050;
  background: #f0f0f0;
}

.scrollbar_up {
  height: 33px;
  padding-top: 8px;
}

.scrollbar_up svg {
  transform: rotate(180deg);
}

.scrollbar_thumb {
  flex: 0 1 287px;
  margin: 0 1px;
  background: #cdcdcd;
}

.scrollbar_down {
  height: 44px;
  margin-top: auto;
}

/* Query settings */
.settings {
  display: flex;
  flex-direction: column;
  width: 266px;
  padding: 15px 24px 20px 14px;
  border-left: solid 1px #d0d0d0;
  font-size: 12px;
  line-height: 16px;
  color: #444;
}

.settings_header {
  display: flex;
  align-items: center;
  justify-content: space-between;
  height: 28px;
  margin-bottom: 17px;
}

.settings_header h2 {
  font-size: 19px;
  font-weight: 300;
  color: #2f7a55;
}

.settings_header button {
  margin-right: 2px;
}

.settings_section {
  display: flex;
  align-items: center;
  gap: 3px;
  font-size: 12px;
  font-weight: 700;
  color: #217346;
}

.settings_section::before {
  border-bottom: solid 6px #444;
  border-left: solid 6px transparent;
  content: "";
}

.settings_props {
  display: flex;
  flex-direction: column;
  padding: 5px 0 18px 9px;
  font-size: 11px;
}

.settings_props input {
  width: 100%;
  height: 22px;
  margin-bottom: 8px;
  padding: 0 5px;
  border: solid 1px #ababab;
  font: inherit;
  color: #222;
}

.settings_props a {
  color: #3c6796;
  text-decoration: none;
}

.steps {
  flex: 1;
  margin: 5px 0 0 9px;
  padding-top: 1px;
  border: solid 1px #c6c6c6;
  font-size: 11px;
}

.step {
  display: flex;
  align-items: center;
  height: 20px;
  padding: 0 8px 0 20px;
}

.step button {
  margin-left: auto;
}

.step-selected {
  gap: 4px;
  padding-left: 5px;
  background: #d3eee1;
}

/* Status bar and taskbar */
.statusbar {
  display: flex;
  align-items: center;
  gap: 14px;
  height: 22px;
  padding: 0 5px;
  color: #fff;
  background: #217346;
}

.statusbar_right {
  margin-left: auto;
}

.taskbar {
  display: flex;
  height: 30px;
  color: #fff;
  background: linear-gradient(90deg, #1c1c1c 41%, #1f1a38 42%, #1f1a38 60%, #1c1c1c 68%);
}

.start {
  width: 36px;
}

.search {
  display: flex;
  align-items: center;
  gap: 8px;
  width: 258px;
  padding-left: 12px;
  border: solid 1px #c8c8c8;
  background: #f1f1f1;
}

.search input {
  width: 180px;
  border: 0;
  font: inherit;
  font-size: 14px;
  background: none;
}

.search input::placeholder {
  color: #333;
}

.tasks {
  display: flex;
}

.tasks button {
  position: relative;
  width: 37px;
}

.tasks .is-current {
  background: #4a4558;
}

.tasks .is-open::after {
  position: absolute;
  right: 4px;
  bottom: 0;
  left: 4px;
  height: 2px;
  background: #76b9ed;
  content: "";
}

.tasks .is-current::after {
  right: 0;
  left: 0;
}

.tray {
  display: flex;
  align-items: center;
  gap: 10px;
  margin-left: auto;
  margin-right: 4px;
  padding-right: 20px;
  border-right: solid 1px #666;
  font-size: 12px;
}

.tray_weather {
  gap: 9px;
  margin-right: 12px;
  font-size: 13px;
}

.tray_clock {
  margin: 0 10px 0 7px;
}

.tray_lang,
.tray_clock {
  font-size: 11px;
}

/* Overlays */
.activate {
  position: absolute;
  right: 70px;
  bottom: 72px;
  display: flex;
  flex-direction: column;
  font-size: 14px;
  line-height: 18px;
  color: rgba(140, 140, 140, 0.7);
  pointer-events: none;
}

.activate strong {
  font-size: 19px;
  font-weight: 400;
  line-height: 28px;
}

.brand {
  position: absolute;
  bottom: 0;
  left: 50%;
  display: flex;
  flex-direction: column;
  align-items: center;
  transform: translateX(-50%);
  color: rgba(212, 212, 212, 0.8);
  pointer-events: none;
}

.brand_ar {
  font: bold 66px/74px "DejaVu Sans", sans-serif;
}

.brand_en {
  font: bold 30px/38px "Open Sans", sans-serif;
}
```
